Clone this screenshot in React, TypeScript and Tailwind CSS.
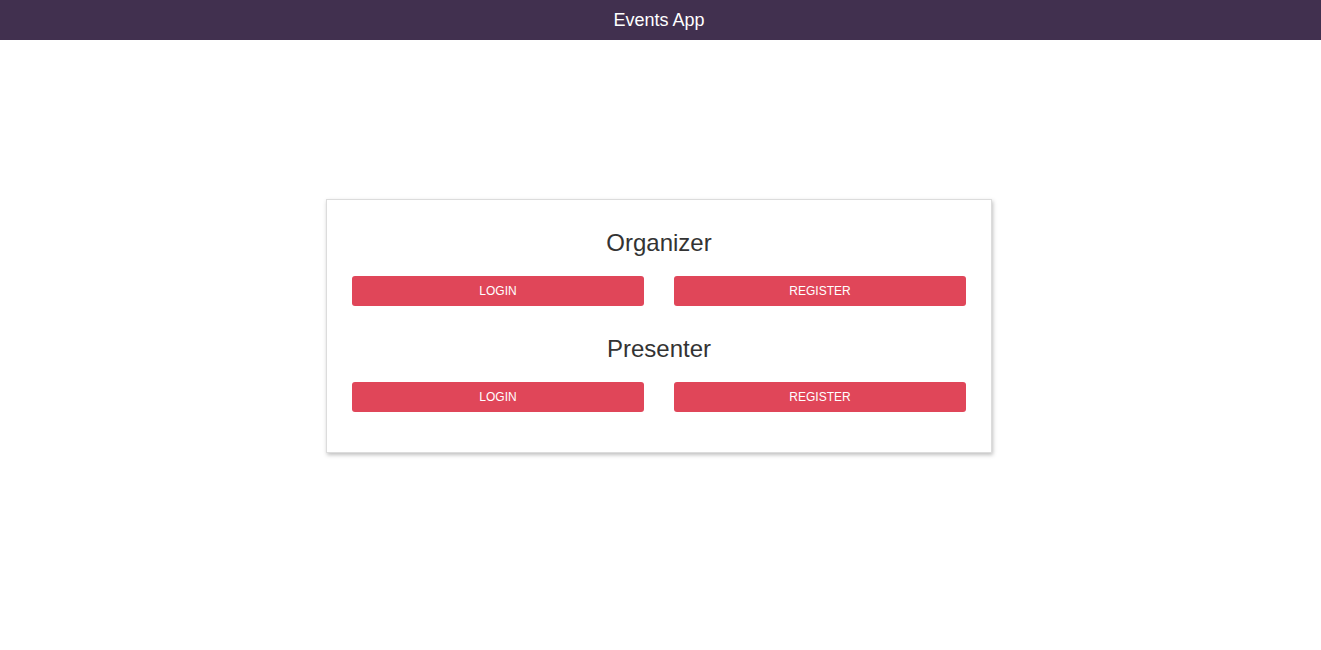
export default function App() {
  const sections = ["Organizer", "Presenter"]

  return (
    <div className="min-h-screen bg-white font-['Liberation_Sans',Arial,sans-serif]">
      {/* header */}
      <header className="h-10 bg-[#41304f] flex items-center justify-center pr-[3px]">
        <span className="text-white text-[18px]">Events App</span>
      </header>

      {/* card */}
      <div className="flex justify-center pr-[3px] pt-[159px]">
        <div className="w-[666px] border border-[#dcdcdc] bg-white shadow-[1px_2px_4px_rgba(0,0,0,0.25)] px-[25px] pt-[29px] pb-[40px]">
          {sections.map((title, i) => (
            <div key={title} className={i > 0 ? "mt-[29px]" : ""}>
              <h2 className="text-center text-[24px] leading-[28px] text-[#333]">{title}</h2>
              <div className="mt-[19px] grid grid-cols-2 gap-[30px]">
                <button className="h-[30px] rounded-[3px] bg-[#e04659] text-white text-[12px] uppercase">
                  Login
                </button>
                <button className="h-[30px] rounded-[3px] bg-[#e04659] text-white text-[12px] uppercase">
                  Register
                </button>
              </div>
            </div>
          ))}
        </div>
      </div>
    </div>
  )
}
